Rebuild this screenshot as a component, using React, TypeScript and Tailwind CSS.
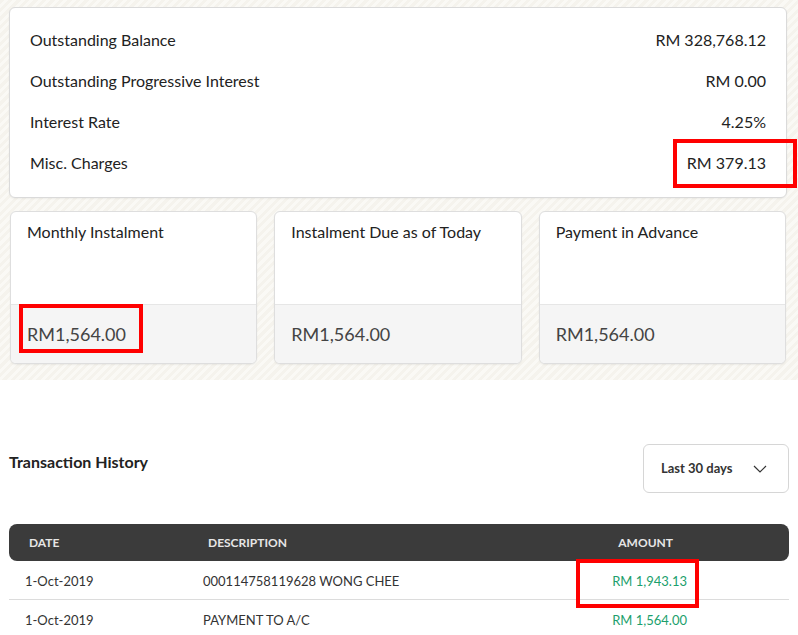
const rows = [
  { label: "Outstanding Balance", value: "RM 328,768.12" },
  { label: "Outstanding Progressive Interest", value: "RM 0.00" },
  { label: "Interest Rate", value: "4.25%" },
  { label: "Misc. Charges", value: "RM 379.13" },
];

const cards = ["Monthly Instalment", "Instalment Due as of Today", "Payment in Advance"];

const txns = [
  { date: "1-Oct-2019", desc: "000114758119628 WONG CHEE", amount: "RM 1,943.13" },
  { date: "1-Oct-2019", desc: "PAYMENT TO A/C", amount: "RM 1,564.00" },
];

export default function App() {
  return (
    <div className="relative w-[798px] h-[635px] overflow-hidden bg-white font-['Lato','Noto_Sans',sans-serif] text-[#222]">
      {/* summary area */}
      <section className="bg-[repeating-linear-gradient(135deg,#f5f3ed_0px,#f5f3ed_3px,#faf9f5_3px,#faf9f5_6px)] pt-[7px] pb-4">
        <div className="mx-[9px] w-[778px] rounded-md border border-[#dadada] bg-white pt-[11px] pb-[14px] px-5 shadow-[0_1px_2px_rgba(0,0,0,0.05)]">
          {rows.map((r) => (
            <div key={r.label} className="flex h-[41px] items-center justify-between text-[16px]">
              <span>{r.label}</span>
              <span>{r.value}</span>
            </div>
          ))}
        </div>

        <div className="mt-[13px] ml-[10px] grid w-[776px] grid-cols-3 gap-[17px]">
          {cards.map((c) => (
            <div
              key={c}
              className="flex h-[153px] flex-col overflow-hidden rounded-md border border-[#dedede] bg-white shadow-[0_1px_2px_rgba(0,0,0,0.06)]"
            >
              <div className="h-[92px] px-4 pt-[10px] text-[16px] leading-5">{c}</div>
              <div className="flex flex-1 items-center border-t border-[#e6e6e6] bg-[#f5f5f5] px-4 text-[18px] text-[#444]">
                RM1,564.00
              </div>
            </div>
          ))}
        </div>
      </section>

      {/* transaction history */}
      <section className="px-[9px] pt-16">
        <div className="flex items-start justify-between">
          <h2 className="pt-[6px] text-[16px] font-bold leading-6">Transaction History</h2>
          <button className="flex h-[49px] w-[146px] items-center justify-between rounded-md border border-[#d6d6d6] bg-white pl-[17px] pr-[21px] text-[13px] font-bold text-[#333]">
            Last 30 days
            <svg width="14" height="8" viewBox="0 0 14 8" fill="none" stroke="#333" strokeWidth="1.2">
              <path d="M1 1l6 6 6-6" />
            </svg>
          </button>
        </div>

        <div className="mt-[31px]">
          <div className="flex h-[37px] items-center rounded-lg bg-[#3b3b3b] pl-5 pr-[116px] text-[12px] font-bold text-[#e6e6e6]">
            <span className="w-[179px]">DATE</span>
            <span className="flex-1">DESCRIPTION</span>
            <span>AMOUNT</span>
          </div>
          {txns.map((t, i) => (
            <div
              key={i}
              className={`flex h-[39px] items-center pl-4 pr-[102px] pt-[3px] text-[13px] text-[#333] ${
                i === 0 ? "border-b border-[#dcdcdc]" : ""
              }`}
            >
              <span className="w-[178px]">{t.date}</span>
              <span className="flex-1">{t.desc}</span>
              <span className="text-[#1c9f6d]">{t.amount}</span>
            </div>
          ))}
        </div>
      </section>

      {/* highlight annotations */}
      <div className="absolute left-[673px] top-[139px] h-[49px] w-[124px] border-4 border-[#ff0000]" />
      <div className="absolute left-[19px] top-[304px] h-[49px] w-[124px] border-4 border-[#ff0000]" />
      <div className="absolute left-[576px] top-[559px] h-[49px] w-[123px] border-4 border-[#ff0000]" />
    </div>
  );
}
